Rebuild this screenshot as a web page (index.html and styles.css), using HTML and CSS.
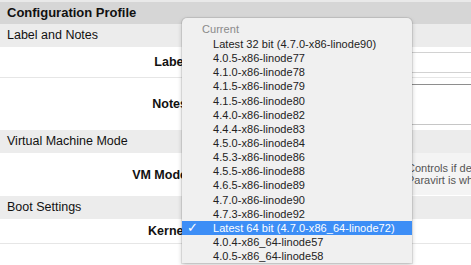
FILE: index.html
```html
<!DOCTYPE html>
<html lang="en">
<head>
  <meta charset="utf-8" />
  <meta name="viewport" content="width=device-width, initial-scale=1.0" />
  <title>Configuration Profile</title>
  <link rel="stylesheet" href="styles.css">
</head>

<body>
  <div class="page">
    <div class="title">Configuration Profile</div>

    <div class="section">Label and Notes</div>
    <div class="row row-label">
      <div class="name">Label</div>
      <div class="field"><input type="text" class="text-input" /></div>
    </div>
    <div class="row row-notes">
      <div class="name">Notes</div>
      <div class="field"><textarea class="notes-input"></textarea></div>
    </div>

    <div class="section">Virtual Machine Mode</div>
    <div class="row row-vm">
      <div class="name">VM Mode</div>
      <div class="field vm-field"></div>
      <div class="help">Controls if de<br>Paravirt is wh</div>
    </div>

    <div class="section">Boot Settings</div>
    <div class="row row-kernel">
      <div class="name">Kernel</div>
      <div class="field"></div>
    </div>
  </div>

  <div class="menu">
    <div class="menu-group">Current</div>
    <div class="menu-item">Latest 32 bit (4.7.0-x86-linode90)</div>
    <div class="menu-item">4.0.5-x86-linode77</div>
    <div class="menu-item">4.1.0-x86-linode78</div>
    <div class="menu-item">4.1.5-x86-linode79</div>
    <div class="menu-item">4.1.5-x86-linode80</div>
    <div class="menu-item">4.4.0-x86-linode82</div>
    <div class="menu-item">4.4.4-x86-linode83</div>
    <div class="menu-item">4.5.0-x86-linode84</div>
    <div class="menu-item">4.5.3-x86-linode86</div>
    <div class="menu-item">4.5.5-x86-linode88</div>
    <div class="menu-item">4.6.5-x86-linode89</div>
    <div class="menu-item">4.7.0-x86-linode90</div>
    <div class="menu-item">4.7.3-x86-linode92</div>
    <div class="menu-item selected"><span class="check">&#10003;</span>Latest 64 bit (4.7.0-x86_64-linode72)</div>
    <div class="menu-item">4.0.4-x86_64-linode57</div>
    <div class="menu-item">4.0.5-x86_64-linode58</div>
  </div>
</body>
</html>
```

FILE: styles.css
```css
body {
  margin: 0;
  font-family: "Liberation Sans", Arial, sans-serif;
  font-size: 12.5px;
  color: #111;
  background: #fff;
  overflow: hidden;
  height: 265px;
}

.page {
  padding-top: 2px;
  background: #e9e9e9;
}

.title {
  background: #d6d6d6;
  font-weight: bold;
  font-size: 13px;
  height: 22px;
  line-height: 22px;
  padding-left: 7px;
}

.section {
  background: #ececec;
  height: 23px;
  line-height: 23px;
  padding-left: 7px;
}

.row {
  display: flex;
  align-items: center;
  background: #fff;
}

.row-label {
  height: 30px;
  border-bottom: 1px solid #e6e6e6;
}

.row-notes {
  height: 52px;
}

.row-vm {
  height: 43px;
  align-items: stretch;
}

.row-kernel {
  height: 24px;
  border-bottom: 1px solid #e6e6e6;
}

.name {
  width: 187px;
  flex: none;
  text-align: right;
  font-weight: bold;
  align-self: center;
}

.field {
  flex: 1;
  padding-left: 10px;
}

.text-input {
  display: block;
  width: 320px;
  height: 21px;
  box-sizing: border-box;
  border: 1px solid #d2d2d2;
  margin: 0;
}

.notes-input {
  display: block;
  width: 320px;
  height: 41px;
  box-sizing: border-box;
  border: 1px solid #c6c6c6;
  border-top-color: #8e8e8e;
  margin: 0;
  resize: none;
}

.vm-field {
  flex: none;
  width: 205px;
}

.help {
  flex: 1;
  background: #f4f4f4;
  color: #555;
  font-size: 11px;
  line-height: 12px;
  padding: 9px 0 0 5px;
  margin-bottom: 1px;
  white-space: nowrap;
  overflow: hidden;
}

.menu {
  position: absolute;
  left: 182px;
  top: 18px;
  width: 230px;
  padding-top: 4px;
  background: #f0f0f0;
  border-radius: 5px 5px 0 0;
  box-shadow: 0 0 0 1px rgba(0, 0, 0, 0.08), 0 2px 5px rgba(0, 0, 0, 0.22);
  font-size: 11px;
  color: #222;
  letter-spacing: 0.05px;
}

.menu-group {
  height: 15px;
  line-height: 15px;
  padding-left: 20px;
  color: #8a8a8a;
}

.menu-item {
  position: relative;
  height: 14.15px;
  line-height: 14.15px;
  padding-left: 31px;
  white-space: nowrap;
}

.menu-item.selected {
  background: #3d8ef6;
  color: #fff;
}

.check {
  position: absolute;
  left: 5px;
  top: 0;
  font-size: 13px;
  font-weight: bold;
  font-family: "DejaVu Sans", sans-serif;
}
```
